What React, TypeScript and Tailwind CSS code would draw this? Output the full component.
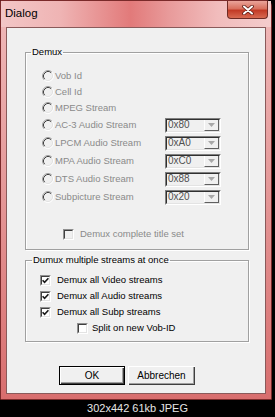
import React from 'react';

const Radio = () => (
  <svg width="12" height="12" viewBox="0 0 12 12" className="shrink-0">
    <circle cx="6" cy="6" r="4.5" fill="#f0f0f0" />
    <path d="M2.11 9.89A5.5 5.5 0 0 1 9.89 2.11" stroke="#a0a0a0" fill="none" />
    <path d="M9.89 2.11A5.5 5.5 0 0 1 2.11 9.89" stroke="#ffffff" fill="none" />
    <path d="M2.82 9.18A4.5 4.5 0 0 1 9.18 2.82" stroke="#404040" fill="none" />
    <path d="M9.18 2.82A4.5 4.5 0 0 1 2.82 9.18" stroke="#e3e3e3" fill="none" />
  </svg>
);

const CheckBox = ({ checked = false, disabled = false }: { checked?: boolean; disabled?: boolean }) => (
  <span className="shrink-0 w-[11px] h-[11px] flex border border-t-[#909090] border-l-[#909090] border-r-white border-b-white">
    <span
      className={`flex-1 flex items-center justify-center border border-t-[#404040] border-l-[#404040] border-r-[#e3e3e3] border-b-[#e3e3e3] ${
        disabled ? 'bg-[#f0f0f0]' : 'bg-white'
      }`}
    >
      {checked && (
        <svg width="7" height="7" viewBox="0 0 7 7">
          <path d="M0.6 3.2L2.6 5.3L6.4 1.2" stroke="#1a1a1a" strokeWidth="1.6" fill="none" />
        </svg>
      )}
    </span>
  </span>
);

const Combo = ({ value }: { value: string }) => (
  <div className="flex w-[56px] h-[15px] border border-t-[#808080] border-l-[#808080] border-r-white border-b-white">
    <div className="flex flex-1 border border-t-[#303030] border-l-[#303030] border-r-[#e3e3e3] border-b-[#e3e3e3] bg-[#f0f0f0]">
      <span className="flex-1 flex items-center pl-[1px] text-[10px] leading-none text-[#505050]">{value}</span>
      <span className="w-[15px] flex items-center justify-center border-l border-l-white border-r border-r-[#606060] border-b border-b-[#606060] bg-[#f0f0f0]">
        <svg width="7" height="4" viewBox="0 0 7 4">
          <path d="M0 0H7L3.5 4Z" fill="#a8a8a8" />
        </svg>
      </span>
    </div>
  </div>
);

const streams = [
  { label: 'AC-3 Audio Stream', value: '0x80' },
  { label: 'LPCM Audio Stream', value: '0xA0' },
  { label: 'MPA Audio Stream', value: '0xC0' },
  { label: 'DTS Audio Stream', value: '0x88' },
  { label: 'Subpicture Stream', value: '0x20' },
];

export default function App() {
  return (
    <div className="w-[275px] h-[417px] bg-black flex flex-col font-['Liberation_Sans',Arial,sans-serif] overflow-hidden">
      {/* window */}
      <div className="w-[272px] h-[400px] flex flex-col border border-[#7a2a2a] rounded-tr-[6px] bg-[linear-gradient(180deg,#f0baba_0%,#e59a9a_45%,#d86e6e_100%)]">
        {/* title bar */}
        <div className="h-[26px] flex items-start justify-between bg-[linear-gradient(90deg,#f2c6c6_0%,#efb4b4_22%,#e27a7a_48%,#e89a9a_62%,#f1bcbc_80%,#f4cccc_100%)]">
          <span className="pl-[4px] pt-[7px] text-[11.5px] leading-none text-black">Dialog</span>
          <div className="mr-[3px] w-[41px] h-[18px] flex items-center justify-center rounded-b-[4px] border border-t-0 border-[#6e2a24] bg-[linear-gradient(180deg,#eaa49a_0%,#d8705e_45%,#c23a26_55%,#d86a52_100%)]">
            <svg width="12" height="10" viewBox="0 0 12 10">
              <path d="M2 1.5L10 8.5M10 1.5L2 8.5" stroke="#5a1a14" strokeWidth="3.6" strokeLinecap="round" />
              <path d="M2 1.5L10 8.5M10 1.5L2 8.5" stroke="#ffffff" strokeWidth="2" strokeLinecap="round" />
            </svg>
          </div>
        </div>

        {/* client area */}
        <div className="mx-[5px] w-[260px] h-[367px] border border-[#8a5a5a] bg-[#f0f0f0] text-[9.5px] leading-none">
          {/* Demux group */}
          <fieldset className="mt-[18px] ml-[18px] w-[224px] border border-[#a0a0a0] shadow-[inset_1px_1px_0_#ffffff,1px_1px_0_#ffffff] p-0">
            <legend className="ml-[5px] px-[1px] h-[12px] leading-[12px] text-black">Demux</legend>
            <div className="pt-[10px] pb-[7px] pl-[16px] flex flex-col">
              {['Vob Id', 'Cell Id', 'MPEG Stream'].map((l) => (
                <div key={l} className="h-[16px] flex items-center">
                  <Radio />
                  <span className="ml-[1px] text-[#8a8a8a]">{l}</span>
                </div>
              ))}
              {streams.map((s) => (
                <div key={s.label} className="h-[18px] flex items-center">
                  <div className="w-[123px] flex items-center">
                    <Radio />
                    <span className="ml-[1px] text-[#8a8a8a]">{s.label}</span>
                  </div>
                  <Combo value={s.value} />
                </div>
              ))}
              <div className="mt-[20px] h-[16px] flex items-center pl-[21px]">
                <CheckBox disabled />
                <span className="ml-[6px] text-[#8a8a8a]">Demux complete title set</span>
              </div>
            </div>
          </fieldset>

          {/* multiple streams group */}
          <fieldset className="mt-[4px] ml-[18px] w-[224px] border border-[#a0a0a0] shadow-[inset_1px_1px_0_#ffffff,1px_1px_0_#ffffff] p-0">
            <legend className="ml-[6px] px-[1px] h-[12px] leading-[12px] text-black">Dumux multiple streams at once</legend>
            <div className="pt-[6px] pb-[5px] pl-[14px] flex flex-col text-black">
              {['Demux all Video streams', 'Demux all Audio streams', 'Demux all Subp streams'].map((l) => (
                <div key={l} className="h-[16px] flex items-center">
                  <CheckBox checked />
                  <span className="ml-[6px]">{l}</span>
                </div>
              ))}
              <div className="h-[16px] flex items-center pl-[37px]">
                <CheckBox />
                <span className="ml-[4px]">Split on new Vob-ID</span>
              </div>
            </div>
          </fieldset>

          {/* buttons */}
          <div className="mt-[24px] ml-[52px] flex gap-[3px] text-[10px]">
            <button className="w-[66px] h-[19px] border border-black bg-[#f0f0f0] text-black shadow-[inset_1px_1px_0_#ffffff,inset_-1px_-1px_0_#404040,inset_-2px_-2px_0_#a0a0a0]">
              OK
            </button>
            <button className="w-[67px] h-[19px] bg-[#f0f0f0] text-black shadow-[inset_1px_1px_0_#ffffff,inset_-1px_-1px_0_#404040,inset_-2px_-2px_0_#a0a0a0]">
              Abbrechen
            </button>
          </div>
        </div>
      </div>

      {/* caption */}
      <div className="flex-1 flex items-center justify-center text-[11px] text-[#e6e6e6]">302x442 61kb JPEG</div>
    </div>
  );
}
